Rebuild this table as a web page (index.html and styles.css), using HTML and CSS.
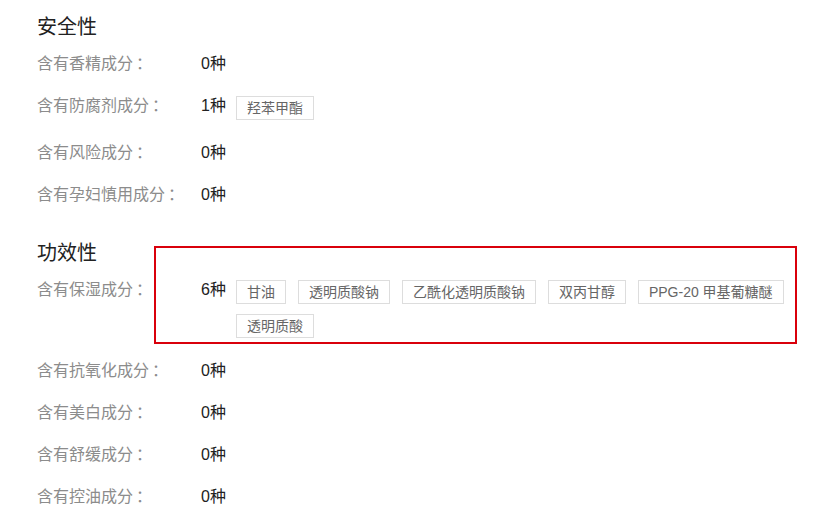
FILE: index.html
```html
<!DOCTYPE html>
<html lang="zh-CN">
<head>
  <meta charset="UTF-8">
  <title>成分分析</title>
  <link rel="stylesheet" href="styles.css">
</head>
<body>
  <div class="analysis">
    <!-- 安全性 -->
    <div class="section">
      <h2 class="section-title">安全性</h2>
      <div class="row">
        <span class="label">含有香精成分<i>：</i></span>
        <span class="count">0种</span>
      </div>
      <div class="row">
        <span class="label">含有防腐剂成分<i>：</i></span>
        <span class="count">1种</span>
        <div class="tags">
          <span class="tag">羟苯甲酯</span>
        </div>
      </div>
      <div class="row">
        <span class="label">含有风险成分<i>：</i></span>
        <span class="count">0种</span>
      </div>
      <div class="row">
        <span class="label">含有孕妇慎用成分<i>：</i></span>
        <span class="count">0种</span>
      </div>
    </div>

    <!-- 功效性 -->
    <div class="section">
      <h2 class="section-title">功效性</h2>
      <div class="row">
        <span class="label">含有保湿成分<i>：</i></span>
        <span class="count">6种</span>
        <div class="tags">
          <span class="tag">甘油</span>
          <span class="tag">透明质酸钠</span>
          <span class="tag">乙酰化透明质酸钠</span>
          <span class="tag">双丙甘醇</span>
          <span class="tag">PPG-20 甲基葡糖醚</span>
          <span class="tag">透明质酸</span>
        </div>
      </div>
      <div class="row">
        <span class="label">含有抗氧化成分<i>：</i></span>
        <span class="count">0种</span>
      </div>
      <div class="row">
        <span class="label">含有美白成分<i>：</i></span>
        <span class="count">0种</span>
      </div>
      <div class="row">
        <span class="label">含有舒缓成分<i>：</i></span>
        <span class="count">0种</span>
      </div>
      <div class="row">
        <span class="label">含有控油成分<i>：</i></span>
        <span class="count">0种</span>
      </div>
    </div>

    <!-- highlight box -->
    <div class="highlight"></div>
  </div>
</body>
</html>
```

FILE: styles.css
```css
body {
  margin: 0;
  font-family: "Liberation Sans", "Noto Sans CJK SC", sans-serif;
  background-color: #fff;
  color: #333;
}

.analysis {
  position: relative;
  padding: 13px 0 0 37px;
}

.section + .section {
  margin-top: 13px;
}

.section-title {
  margin: 0 0 12px;
  font-size: 20px;
  font-weight: normal;
  line-height: 28px;
  color: #222;
}

.row {
  display: flex;
  align-items: flex-start;
  padding-bottom: 20px;
  font-size: 16px;
  line-height: 22px;
}

.label {
  flex: 0 0 164px;
  color: #8c8c8c;
}

/* colon sits a bit apart from the text */
.label i {
  font-style: normal;
  margin-left: 3px;
}

.count {
  flex: 0 0 auto;
  margin-right: 10px;
  color: #222;
}

.tags {
  display: flex;
  flex-wrap: wrap;
  gap: 10px 12px;
  padding: 1px 0 2px;
  max-width: 560px;
}

.tag {
  height: 22px;
  padding: 0 10px;
  border: 1px solid #ddd;
  font-size: 14px;
  line-height: 22px;
  color: #666;
}

.highlight {
  position: absolute;
  left: 154px;
  top: 246px;
  width: 639px;
  height: 94px;
  border: 2px solid #d9000b;
}
```
